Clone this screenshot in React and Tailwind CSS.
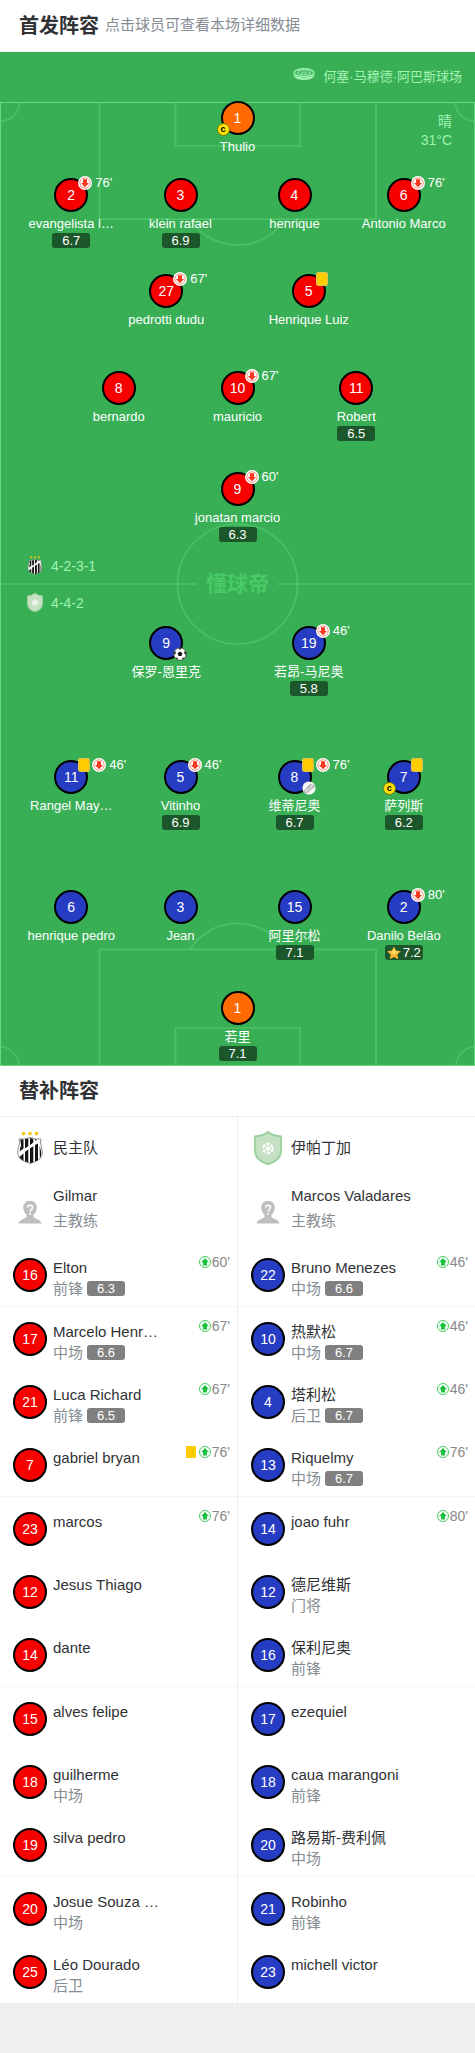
import React from 'react';

const homeRows = [
  { height: 'h-[77px]', players: [{ n: 1, name: 'Thulio', keeper: true, captain: true }] },
  {
    height: 'h-[96px]',
    players: [
      { n: 2, name: 'evangelista l…', off: "76'", rating: '6.7' },
      { n: 3, name: 'klein rafael', rating: '6.9' },
      { n: 4, name: 'henrique' },
      { n: 6, name: 'Antonio Marco', off: "76'" },
    ],
  },
  {
    height: 'h-[97px]',
    players: [
      { n: 27, name: 'pedrotti dudu', off: "67'" },
      { n: 5, name: 'Henrique Luiz', yellow: true },
    ],
  },
  {
    height: 'h-[101px]',
    players: [
      { n: 8, name: 'bernardo' },
      { n: 10, name: 'mauricio', off: "67'" },
      { n: 11, name: 'Robert', rating: '6.5' },
    ],
  },
  { height: 'h-[154px]', players: [{ n: 9, name: 'jonatan marcio', off: "60'", rating: '6.3' }] },
];

const awayRows = [
  {
    height: 'h-[134px]',
    players: [
      { n: 9, name: '保罗-恩里克', goal: true },
      { n: 19, name: '若昂-马尼奥', off: "46'", rating: '5.8' },
    ],
  },
  {
    height: 'h-[130px]',
    players: [
      { n: 11, name: 'Rangel May…', yellow: true, off: "46'" },
      { n: 5, name: 'Vitinho', off: "46'", rating: '6.9' },
      { n: 8, name: '维蒂尼奥', yellow: true, off: "76'", assist: true, rating: '6.7' },
      { n: 7, name: '萨列斯', yellow: true, captain: true, rating: '6.2' },
    ],
  },
  {
    height: 'h-[101px]',
    players: [
      { n: 6, name: 'henrique pedro' },
      { n: 3, name: 'Jean' },
      { n: 15, name: '阿里尔松', rating: '7.1' },
      { n: 2, name: 'Danilo Belão', off: "80'", rating: '7.2', star: true },
    ],
  },
  { height: 'h-[74px]', players: [{ n: 1, name: '若里', keeper: true, rating: '7.1' }] },
];

const homeBench = [
  { n: 16, name: 'Elton', role: '前锋', rating: '6.3', on: "60'" },
  { n: 17, name: 'Marcelo Henr…', role: '中场', rating: '6.6', on: "67'" },
  { n: 21, name: 'Luca Richard', role: '前锋', rating: '6.5', on: "67'" },
  { n: 7, name: 'gabriel bryan', on: "76'", yellow: true },
  { n: 23, name: 'marcos', on: "76'" },
  { n: 12, name: 'Jesus Thiago' },
  { n: 14, name: 'dante' },
  { n: 15, name: 'alves felipe' },
  { n: 18, name: 'guilherme', role: '中场' },
  { n: 19, name: 'silva pedro' },
  { n: 20, name: 'Josue Souza …', role: '中场' },
  { n: 25, name: 'Léo Dourado', role: '后卫' },
];

const awayBench = [
  { n: 22, name: 'Bruno Menezes', role: '中场', rating: '6.6', on: "46'" },
  { n: 10, name: '热默松', role: '中场', rating: '6.7', on: "46'" },
  { n: 4, name: '塔利松', role: '后卫', rating: '6.7', on: "46'" },
  { n: 13, name: 'Riquelmy', role: '中场', rating: '6.7', on: "76'" },
  { n: 14, name: 'joao fuhr', on: "80'" },
  { n: 12, name: '德尼维斯', role: '门将' },
  { n: 16, name: '保利尼奥', role: '前锋' },
  { n: 17, name: 'ezequiel' },
  { n: 18, name: 'caua marangoni', role: '前锋' },
  { n: 20, name: '路易斯-费利佩', role: '中场' },
  { n: 21, name: 'Robinho', role: '前锋' },
  { n: 23, name: 'michell victor' },
];

const rowGrid = {
  1: 'grid-cols-1',
  2: 'grid-cols-2 px-[20%]',
  3: 'grid-cols-3 px-[12.5%]',
  4: 'grid-cols-[22fr_24fr_24fr_22fr] px-[4%]',
};

function HomeCrest({ className }) {
  return (
    <svg viewBox="0 0 28 34" className={className} aria-hidden="true">
      <g fill="#f6c40f">
        <circle cx="7.5" cy="2.6" r="1.8" />
        <circle cx="14" cy="2.6" r="1.8" />
        <circle cx="20.5" cy="2.6" r="1.8" />
      </g>
      <path d="M3 8 Q8 8.500 14 6.500 Q20 8.500 25 8 Q23.500 12 25.500 16 Q28 24 23 28.500 Q19 31 14 32.500 Q9 31 5 28.500 Q0 24 2.500 16 Q4.500 12 3 8Z" fill="#fff" stroke="#777" strokeWidth="0.8" />
      <g fill="#151515">
        <path d="M4.300 8.500h3.200v9l-3.900 3q.5-4 1.500-6z" />
        <path d="M9 8.200l3.300-.8v8.200l-3.300 2.200z" />
        <path d="M14 7l3.300 .9v4l-3.300 2.200z" />
        <path d="M3.300 26l4.200-3.500v7.200q-2.700-1-4.200-3.700z" />
        <path d="M9 20.500l3.300-2v13l-3.300-1.200z" />
        <path d="M14 17l3.300-2v16.200l-3.300 1z" />
        <path d="M19 14l3-1.500v16.800l-3 1.200z" />
        <path d="M23.600 15q3 8 .3 12.400z" />
        <path d="M19.200 8.300l1.800.2-1.800 1.800z" />
      </g>
      <path d="M5 22.500l6-5 5-3 4-4" stroke="#fff" strokeWidth="2.400" fill="none" />
    </svg>
  );
}

function AwayCrest({ className }) {
  return (
    <svg viewBox="0 0 28 34" className={className} aria-hidden="true">
      <path d="M14 1Q19 5 27 5.500V20Q27 29 14 33.200Q1 29 1 20V5.500Q9 5 14 1Z" fill="#c5e0c3" stroke="#98cf9a" strokeWidth="1.800" />
      <circle cx="14" cy="17.500" r="4.700" fill="none" stroke="#fff" strokeWidth="2" strokeDasharray="3.700 1.220" />
      <circle cx="14" cy="17.500" r="2.200" fill="#fff" />
      <path d="M14 13v9M10.100 15.200l7.800 4.600M10.100 19.800l7.800-4.600" stroke="#fff" strokeWidth="0.700" />
    </svg>
  );
}

function Avatar() {
  return (
    <svg viewBox="0 0 24 24" className="size-6" aria-hidden="true">
      <path d="M12 .8c4.200 0 6.800 2.800 6.800 6.800 0 3.400-1.600 5.600-3.200 7.200-.6.700-.4 2.200.4 2.700 2.600 1.600 6.800 2.600 7.500 5.900H.5c.7-3.300 4.900-4.300 7.500-5.900.8-.5 1-2 .4-2.700C6.800 13.200 5.200 11 5.200 7.600 5.200 3.600 7.800.8 12 .8z" fill="#bfbfbf" />
      <path d="M9.600 7.600c0-3 4.900-3 4.900 0 0 1.800-2.400 2-2.400 4.200" fill="none" stroke="#fff" strokeWidth="1.500" />
      <circle cx="12.100" cy="14" r="1" fill="#fff" />
    </svg>
  );
}

function OffIcon() {
  return (
    <svg viewBox="0 0 14 14" className="size-3.5" aria-label="换下" role="img">
      <circle cx="7" cy="7" r="7" fill="#fff" />
      <circle cx="7" cy="7" r="5.200" fill="none" stroke="#f8785f" strokeWidth="0.8" />
      <path d="M5 3.200h4v3.800h2L7 11.200 3 7h2z" fill="#f9391f" />
    </svg>
  );
}

function OnIcon() {
  return (
    <svg viewBox="0 0 12 12" className="size-3" aria-label="换上" role="img">
      <circle cx="6" cy="6" r="5.500" fill="#fff" stroke="#2fc44e" strokeWidth="0.900" />
      <path d="M4 9.600h4V6.200h2L6 2 2 6.200h2z" fill="#1fc042" />
    </svg>
  );
}

function Ball() {
  return (
    <svg viewBox="0 0 14 14" className="size-3.5" aria-label="进球" role="img">
      <circle cx="7" cy="7" r="6.300" fill="#fff" stroke="#333" strokeWidth="0.700" />
      <g fill="#151515">
        <path d="M7 4.500l2.400 1.700-.9 2.800H5.500l-.9-2.800z" />
        <path d="M5 1.200h4L7 2.800z" />
        <path d="M.9 5.200L2.500 4l.2 2.500-1.800 1.400z" />
        <path d="M13.100 5.200L11.500 4l-.2 2.500 1.800 1.400z" />
        <path d="M2.300 10.500l2.200.2.500 2.100q-1.800-.7-2.700-2.300z" />
        <path d="M11.700 10.500l-2.200.2-.5 2.100q1.800-.7 2.700-2.300z" />
      </g>
    </svg>
  );
}

function Boot() {
  return (
    <svg viewBox="0 0 14 14" className="size-3.5" aria-label="助攻" role="img">
      <circle cx="7" cy="7" r="6.600" fill="#f5f5f5" />
      <path d="M2 10.200L5.800 6l2.500-3 1.800 1.600 1.700-.6.500 2-3.600 2.500-3 2.600-2.500.6z" fill="#ddd" stroke="#8a8a8a" strokeWidth="0.700" />
      <path d="M5.500 6.500l1.800 1.600M7 5l1.500 1.500" stroke="#777" strokeWidth="0.700" />
    </svg>
  );
}

function Star() {
  return (
    <svg viewBox="0 0 14 14" className="size-3.5" aria-hidden="true">
      <path d="M7 .4l2.100 4.200 4.700.6-3.400 3.300.8 4.700L7 11l-4.200 2.200.8-4.700L.2 5.200l4.700-.6z" fill="#ffb52e" />
      <path d="M7 1.800l1.600 3.500 3.400.5-5 2.700-4.600-2.700 3.200-.5z" fill="#ffd75e" />
    </svg>
  );
}

function Stadium() {
  return (
    <svg viewBox="0 0 22 12" className="h-3 w-[22px]" aria-hidden="true">
      <path d="M0 5.500Q1 10.500 6 11.600q5 .8 10 0 5-1.100 6-6.100-3 4-11 4T0 5.500z" fill="#a2f3b4" />
      <ellipse cx="11" cy="4.600" rx="10" ry="3.900" fill="none" stroke="#a2f3b4" strokeWidth="1.300" />
      <ellipse cx="11" cy="4.200" rx="6.400" ry="2.300" fill="none" stroke="#a2f3b4" strokeWidth="1.400" strokeDasharray="3 .8" />
      <path d="M8 4.200h6" stroke="#a2f3b4" strokeWidth="1" />
    </svg>
  );
}

function PitchLines() {
  return (
    <svg viewBox="0 0 475 963" preserveAspectRatio="none" className="absolute inset-0 h-full w-full" fill="none" stroke="#4cc267" strokeWidth="1.600" aria-hidden="true">
      <path d="M99.500 0V117H376V0M175.500 0V44H300V0" />
      <path d="M99.500 963V846.500H376V963M175.500 963V925H300V963" />
      <path d="M190 117A56.400 56.400 0 0 0 285 117M190 846.500A56.400 56.400 0 0 1 285 846.500" />
      <circle cx="237.500" cy="481.500" r="60" />
      <path d="M0 481.500H197M277.500 481.500H475" />
      <path d="M19.500 0A19 19 0 0 1 0 19M455.500 0A19 19 0 0 0 475 19M0 944A19 19 0 0 1 19 963M475 944A19 19 0 0 0 456 963" />
      <rect x="0.500" y="0.500" width="474" height="962" stroke="#62d97f" strokeWidth="1" />
    </svg>
  );
}

function Shirt({ number, color }) {
  return (
    <span className={`flex size-[34px] items-center justify-center rounded-full border-2 border-black text-sm text-white ${color}`}>
      {number}
    </span>
  );
}

function YellowCard() {
  return <span role="img" aria-label="黄牌" className="h-3 w-2.5 rounded-[1px] bg-[#ffcc00]" />;
}

function Player({ player, color }) {
  return (
    <button type="button" className="flex w-full cursor-pointer flex-col items-center whitespace-nowrap text-[13px] text-white">
      <span className="relative">
        <Shirt number={player.n} color={player.keeper ? 'bg-[#ff6a00]' : color} />
        <span className="absolute -top-0.5 left-6 flex items-center gap-0.5 leading-[14px]">
          {player.yellow && (
            <span className="flex rounded-[2px] border border-[#dcc45a]">
              <YellowCard />
            </span>
          )}
          {player.off && (
            <>
              <OffIcon />
              <span className="pl-px">{player.off}</span>
            </>
          )}
        </span>
        {player.captain && (
          <span className="absolute -left-1 top-[22px] flex size-[13px] items-center justify-center rounded-full border border-[#6f7a10] bg-[#ffe000] text-[9px] font-bold leading-none text-black">
            c
          </span>
        )}
        {(player.goal || player.assist) && (
          <span className="absolute left-6 top-[21px]">{player.goal ? <Ball /> : <Boot />}</span>
        )}
      </span>
      <span className="mt-1 leading-4">{player.name}</span>
      {player.rating && (
        <span className="mt-px flex h-[15px] w-[38px] items-center justify-center gap-0.5 rounded-[3px] bg-[#1c562b]">
          {player.star && <Star />}
          {player.rating}
        </span>
      )}
    </button>
  );
}

function Rows({ rows, color }) {
  return rows.map((row, i) => (
    <div key={i} className={`grid items-start ${row.height} ${rowGrid[row.players.length]}`}>
      {row.players.map((p) => (
        <Player key={p.n} player={p} color={color} />
      ))}
    </div>
  ));
}

function Bench({ team, crest, coach, players, color, className }) {
  return (
    <section className={`min-w-0 flex-1 ${className}`}>
      <h3 className="flex h-[62px] items-center text-[15px]">
        <span className="flex w-[53px] justify-center pl-1.5">{crest}</span>
        {team}
      </h3>
      <div className="flex h-16 text-[15px] leading-[25px]">
        <div className="flex w-[53px] justify-center pl-1.5 pt-[21px]">
          <Avatar />
        </div>
        <div className="pt-1">
          <p>{coach}</p>
          <p className="text-[#858c92]">主教练</p>
        </div>
      </div>
      <ul>
        {players.map((p, i) => (
          <li key={p.n} className={i % 3 === 0 ? 'h-16 border-b border-[#f5f5f5]' : 'h-[63px]'}>
            <a href="#player" className="flex pl-[13px] pr-[7px] pt-[13px]">
              <span className="pt-0.5">
                <Shirt number={p.n} color={color} />
              </span>
              <span className="ml-1.5 min-w-0 flex-1 pt-px text-[15px] leading-[21px]">
                <span className="block truncate">{p.name}</span>
                {p.role && (
                  <span className="flex items-center gap-1 text-[#858c92]">
                    {p.role}
                    {p.rating && (
                      <span className="flex h-[15px] w-[38px] items-center justify-center rounded-[3px] bg-[#808080] text-[13px] text-white">
                        {p.rating}
                      </span>
                    )}
                  </span>
                )}
              </span>
              {p.on && (
                <span className="flex h-3 items-center text-sm text-[#888]">
                  {p.yellow && (
                    <span className="mr-[3px] flex">
                      <YellowCard />
                    </span>
                  )}
                  <OnIcon />
                  <span className="pl-px">{p.on}</span>
                </span>
              )}
            </a>
          </li>
        ))}
      </ul>
    </section>
  );
}

export default function App() {
  return (
    <main className="min-h-screen bg-[#eeeff1] pb-[50px] font-['Liberation_Sans','Noto_Sans_CJK_SC',sans-serif] text-[#303236]">
      <header className="flex h-[52px] items-center gap-1.5 border-b border-[#ececec] bg-white px-[19px]">
        <h1 className="text-xl font-bold">首发阵容</h1>
        <p className="text-[15px] text-[#858c92]">点击球员可查看本场详细数据</p>
      </header>

      <section className="bg-[#38af55] text-[#a2f3b4]">
        <div className="flex h-[50px] items-center justify-end gap-2 pr-[13px] text-[13px]">
          <span className="pb-1.5">
            <Stadium />
          </span>
          <p>何塞·马穆德·阿巴斯球场</p>
        </div>

        <div className="relative flow-root">
          <PitchLines />
          <div className="absolute right-[23px] top-2.5 text-right text-sm leading-[19px]">
            <p>晴</p>
            <p>31°C</p>
          </div>
          <div className="absolute left-[27px] top-1/2 flex -translate-y-1/2 flex-col gap-[17px] text-sm">
            <p className="flex h-5 items-center gap-2">
              <HomeCrest className="h-5 w-4" />
              4-2-3-1
            </p>
            <p className="flex h-5 items-center gap-2">
              <AwayCrest className="h-5 w-4" />
              4-4-2
            </p>
          </div>
          <p className="absolute inset-x-0 top-1/2 -translate-y-1/2 text-center text-[21px] font-bold leading-6 text-[#48ca66]">懂球帝</p>
          <div className="relative -mt-px pb-px">
            <Rows rows={homeRows} color="bg-[#f70000]" />
            <Rows rows={awayRows} color="bg-[#263cc3]" />
          </div>
        </div>
      </section>

      <div className="bg-white">
        <h2 className="flex h-[51px] items-center border-b border-[#ececec] px-[19px] text-xl font-bold">替补阵容</h2>
        <div className="flex">
          <Bench
            team="民主队"
            crest={<HomeCrest className="h-[34px] w-7" />}
            coach="Gilmar"
            players={homeBench}
            color="bg-[#f70000]"
            className="border-r border-[#ececec]"
          />
          <Bench
            team="伊帕丁加"
            crest={<AwayCrest className="h-[34px] w-7" />}
            coach="Marcos Valadares"
            players={awayBench}
            color="bg-[#263cc3]"
            className=""
          />
        </div>
      </div>
    </main>
  );
}
